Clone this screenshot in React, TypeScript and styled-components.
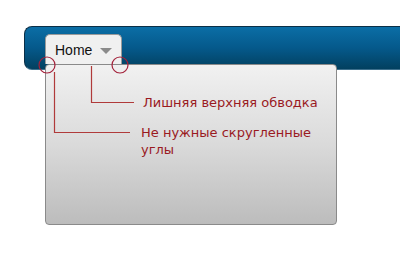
import React from "react";
import styled, { createGlobalStyle } from "styled-components";

const GlobalStyle = createGlobalStyle`
  html, body {
    margin: 0;
    padding: 0;
    background: #ffffff;
  }
  body {
    font-family: "Liberation Sans", Arial, sans-serif;
  }
`;

const Page = styled.div`
  position: relative;
  width: 400px;
  height: 255px;
  overflow: hidden;
  padding: 26px 0 0 24px;
  box-sizing: border-box;
`;

const NavBar = styled.div`
  display: flex;
  align-items: flex-start;
  height: 44px;
  box-sizing: border-box;
  padding: 7px 0 0 20px;
  border: 1px solid #0b2f47;
  border-right: none;
  border-bottom-color: #3c6f8c;
  border-radius: 8px 0 0 8px;
  background: linear-gradient(to bottom, #0b6ea6 0%, #05598b 50%, #02405f 100%);
`;

const MenuItem = styled.div`
  position: relative;
`;

const Tab = styled.div`
  display: flex;
  align-items: center;
  gap: 8px;
  height: 30px;
  width: 77px;
  box-sizing: border-box;
  padding: 1px 0 0 9px;
  background: #f0f0f0;
  border: 1px solid #9a9a9a;
  border-bottom: none;
  border-radius: 5px 5px 0 0;
  font-size: 14px;
  color: #111;
`;

const Arrow = styled.span`
  width: 0;
  height: 0;
  margin-top: 1px;
  border-left: 6px solid transparent;
  border-right: 6px solid transparent;
  border-top: 6px solid #8a8a8a;
`;

const Dropdown = styled.div`
  position: absolute;
  top: 100%;
  left: 0;
  width: 292px;
  height: 161px;
  box-sizing: border-box;
  border: 1px solid #8a8a8a;
  border-radius: 4px;
  background: linear-gradient(to bottom, #f1f1f1 0%, #dadada 50%, #bcbcbc 100%);
  z-index: 1;
`;

const Overlay = styled.svg`
  position: absolute;
  top: 0;
  left: 0;
  z-index: 2;
  pointer-events: none;
`;

const Note = styled.div<{ $top: number; $left: number }>`
  position: absolute;
  top: ${(p) => p.$top}px;
  left: ${(p) => p.$left}px;
  z-index: 3;
  font-family: "DejaVu Sans", Verdana, sans-serif;
  font-size: 13px;
  line-height: 17px;
  color: #9a1a1f;
  white-space: nowrap;
`;

export default function App() {
  return (
    <>
      <GlobalStyle />
      <Page>
        <NavBar>
          <MenuItem>
            <Tab>
              Home
              <Arrow />
            </Tab>
            <Dropdown />
          </MenuItem>
        </NavBar>

        <Overlay width="400" height="255" viewBox="0 0 400 255">
          <g fill="none" stroke="#a3213a" strokeWidth="1.2">
            <circle cx="47" cy="65" r="8" />
            <circle cx="120" cy="65" r="8" />
          </g>
          <g fill="none" stroke="#b03a3a" strokeWidth="1.2">
            <polyline points="54.5,72 54.5,132.5 130,132.5" />
            <polyline points="91.5,66 91.5,102.5 134,102.5" />
          </g>
        </Overlay>

        <Note $top={94} $left={143}>Лишняя верхняя обводка</Note>
        <Note $top={124} $left={141}>
          Не нужные скругленные
          <br />
          углы
        </Note>
      </Page>
    </>
  );
}
